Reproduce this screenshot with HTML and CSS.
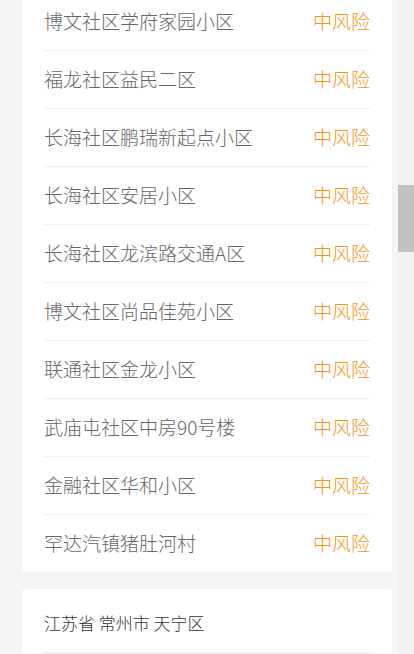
FILE: index.html
```html
<!DOCTYPE html>
<html lang="zh-CN">
<head>
    <meta charset="UTF-8">
    <meta name="viewport" content="width=device-width, initial-scale=1.0">
    <title>风险地区查询</title>
    <link rel="stylesheet" href="styles.css">
</head>
<body>

<section class="card risk-list">
    <div class="row"><span class="name">博文社区学府家园小区</span><span class="level">中风险</span></div>
    <div class="row"><span class="name">福龙社区益民二区</span><span class="level">中风险</span></div>
    <div class="row"><span class="name">长海社区鹏瑞新起点小区</span><span class="level">中风险</span></div>
    <div class="row"><span class="name">长海社区安居小区</span><span class="level">中风险</span></div>
    <div class="row"><span class="name">长海社区龙滨路交通A区</span><span class="level">中风险</span></div>
    <div class="row"><span class="name">博文社区尚品佳苑小区</span><span class="level">中风险</span></div>
    <div class="row"><span class="name">联通社区金龙小区</span><span class="level">中风险</span></div>
    <div class="row"><span class="name">武庙屯社区中房90号楼</span><span class="level">中风险</span></div>
    <div class="row"><span class="name">金融社区华和小区</span><span class="level">中风险</span></div>
    <div class="row"><span class="name">罕达汽镇猪肚河村</span><span class="level">中风险</span></div>
</section>

<section class="card region">
    <div class="region-title">江苏省 常州市 天宁区</div>
</section>

<!-- page scrollbar as seen in the screenshot -->
<div class="scroll-track"><div class="scroll-thumb"></div></div>

</body>
</html>
```

FILE: styles.css
```css
body {
    font-family: "Noto Sans CJK SC", "Noto Sans", sans-serif;
    font-weight: 300;
    margin: 0;
    background-color: #f5f5f5;
    height: 654px;
    overflow: hidden;
}
.card {
    background-color: #fff;
    border-radius: 4px;
    margin: 0 22px 17px 22px;
    width: 370px;
    padding: 0 22px;
    box-sizing: border-box;
}
.risk-list {
    margin-top: -7px;
}
.row {
    display: flex;
    justify-content: space-between;
    align-items: center;
    height: 58px;
    padding-bottom: 2px;
    box-sizing: border-box;
    border-bottom: 1px solid #eee;
    font-size: 19px;
}
.row:last-child {
    height: 57px;
    border-bottom: none;
}
.name {
    color: #666;
}
.level {
    color: #f39310;
}
.region {
    padding-top: 6px;
}
.region-title {
    display: flex;
    align-items: center;
    height: 58px;
    padding-bottom: 3px;
    box-sizing: border-box;
    border-bottom: 1px solid #eee;
    font-size: 17px;
    color: #333;
}
.scroll-track {
    position: fixed;
    top: 0;
    right: 0;
    width: 16px;
    height: 654px;
    background-color: #f1f1f1;
}
.scroll-thumb {
    margin-top: 185px;
    height: 67px;
    background-color: #c1c1c1;
}
```
